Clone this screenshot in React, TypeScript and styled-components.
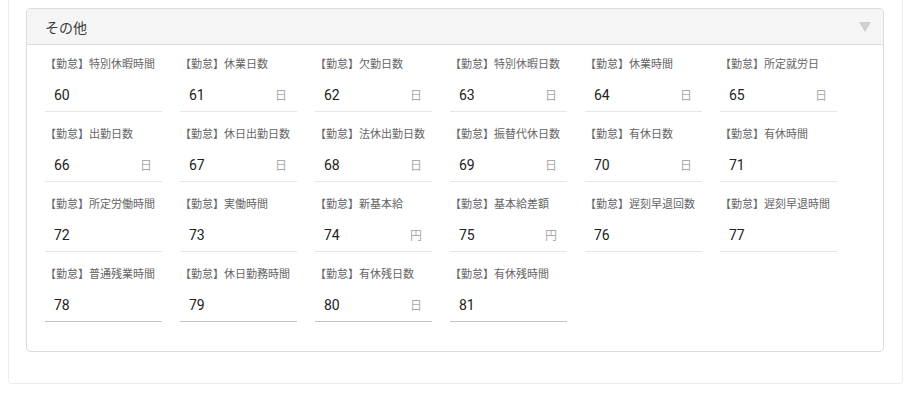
import React from 'react';
import styled, { createGlobalStyle } from 'styled-components';

const GlobalStyle = createGlobalStyle`
  body {
    margin: 0;
    background: #fff;
    font-family: Roboto, "Noto Sans CJK JP", sans-serif;
  }
`;

const Page = styled.div`
  padding: 0 12px 13px 8px;
`;

const OuterCard = styled.div`
  border: 1px solid #f1ecec;
  border-top: none;
  border-radius: 0 0 4px 4px;
  padding: 8px 18px 31px 17px;
`;

const Panel = styled.section`
  border: 1px solid #dcdcdc;
  border-radius: 4px;
  overflow: hidden;
`;

const PanelHeader = styled.header`
  height: 35px;
  display: flex;
  align-items: center;
  justify-content: space-between;
  padding: 0 12px 0 18px;
  background: #f5f5f5;
  border-bottom: 1px solid #dcdcdc;
`;

const PanelTitle = styled.h2`
  margin: 0;
  font-size: 14px;
  font-weight: 400;
  color: #3a3a3a;
`;

const Caret = styled.span`
  width: 0;
  height: 0;
  border-left: 6px solid transparent;
  border-right: 6px solid transparent;
  border-top: 10px solid #cfcfcf;
`;

const FieldGrid = styled.div`
  display: grid;
  grid-template-columns: repeat(6, 117px);
  column-gap: 18px;
  row-gap: 15px;
  padding: 12px 18px 29px;
`;

const Field = styled.div`
  display: flex;
  flex-direction: column;
`;

const Label = styled.label`
  font-size: 11px;
  line-height: 16px;
  color: #666;
  margin-bottom: 6px;
  white-space: nowrap;
`;

const InputBox = styled.div<{ $strong?: boolean }>`
  height: 31px;
  display: flex;
  align-items: center;
  justify-content: space-between;
  padding: 0 10px 1px 9px;
  border-bottom: 1px solid ${(p) => (p.$strong ? '#c4c4c4' : '#e6e6e6')};
`;

const Value = styled.span`
  font-size: 14px;
  color: #222;
`;

const Unit = styled.span`
  font-size: 12px;
  color: #aaa;
`;

type Item = { label: string; value: number; unit?: string };

const items: Item[] = [
  { label: '特別休暇時間', value: 60 },
  { label: '休業日数', value: 61, unit: '日' },
  { label: '欠勤日数', value: 62, unit: '日' },
  { label: '特別休暇日数', value: 63, unit: '日' },
  { label: '休業時間', value: 64, unit: '日' },
  { label: '所定就労日', value: 65, unit: '日' },
  { label: '出勤日数', value: 66, unit: '日' },
  { label: '休日出勤日数', value: 67, unit: '日' },
  { label: '法休出勤日数', value: 68, unit: '日' },
  { label: '振替代休日数', value: 69, unit: '日' },
  { label: '有休日数', value: 70, unit: '日' },
  { label: '有休時間', value: 71 },
  { label: '所定労働時間', value: 72 },
  { label: '実働時間', value: 73 },
  { label: '新基本給', value: 74, unit: '円' },
  { label: '基本給差額', value: 75, unit: '円' },
  { label: '遅刻早退回数', value: 76 },
  { label: '遅刻早退時間', value: 77 },
  { label: '普通残業時間', value: 78 },
  { label: '休日勤務時間', value: 79 },
  { label: '有休残日数', value: 80, unit: '日' },
  { label: '有休残時間', value: 81 },
];

const App: React.FC = () => {
  return (
    <>
      <GlobalStyle />
      <Page>
        <OuterCard>
          <Panel>
            <PanelHeader>
              <PanelTitle>その他</PanelTitle>
              <Caret />
            </PanelHeader>
            <FieldGrid>
              {items.map((item, index) => (
                <Field key={index}>
                  <Label>【勤怠】{item.label}</Label>
                  <InputBox $strong={index >= 18}>
                    <Value>{item.value}</Value>
                    {item.unit && <Unit>{item.unit}</Unit>}
                  </InputBox>
                </Field>
              ))}
            </FieldGrid>
          </Panel>
        </OuterCard>
      </Page>
    </>
  );
};

export default App;
